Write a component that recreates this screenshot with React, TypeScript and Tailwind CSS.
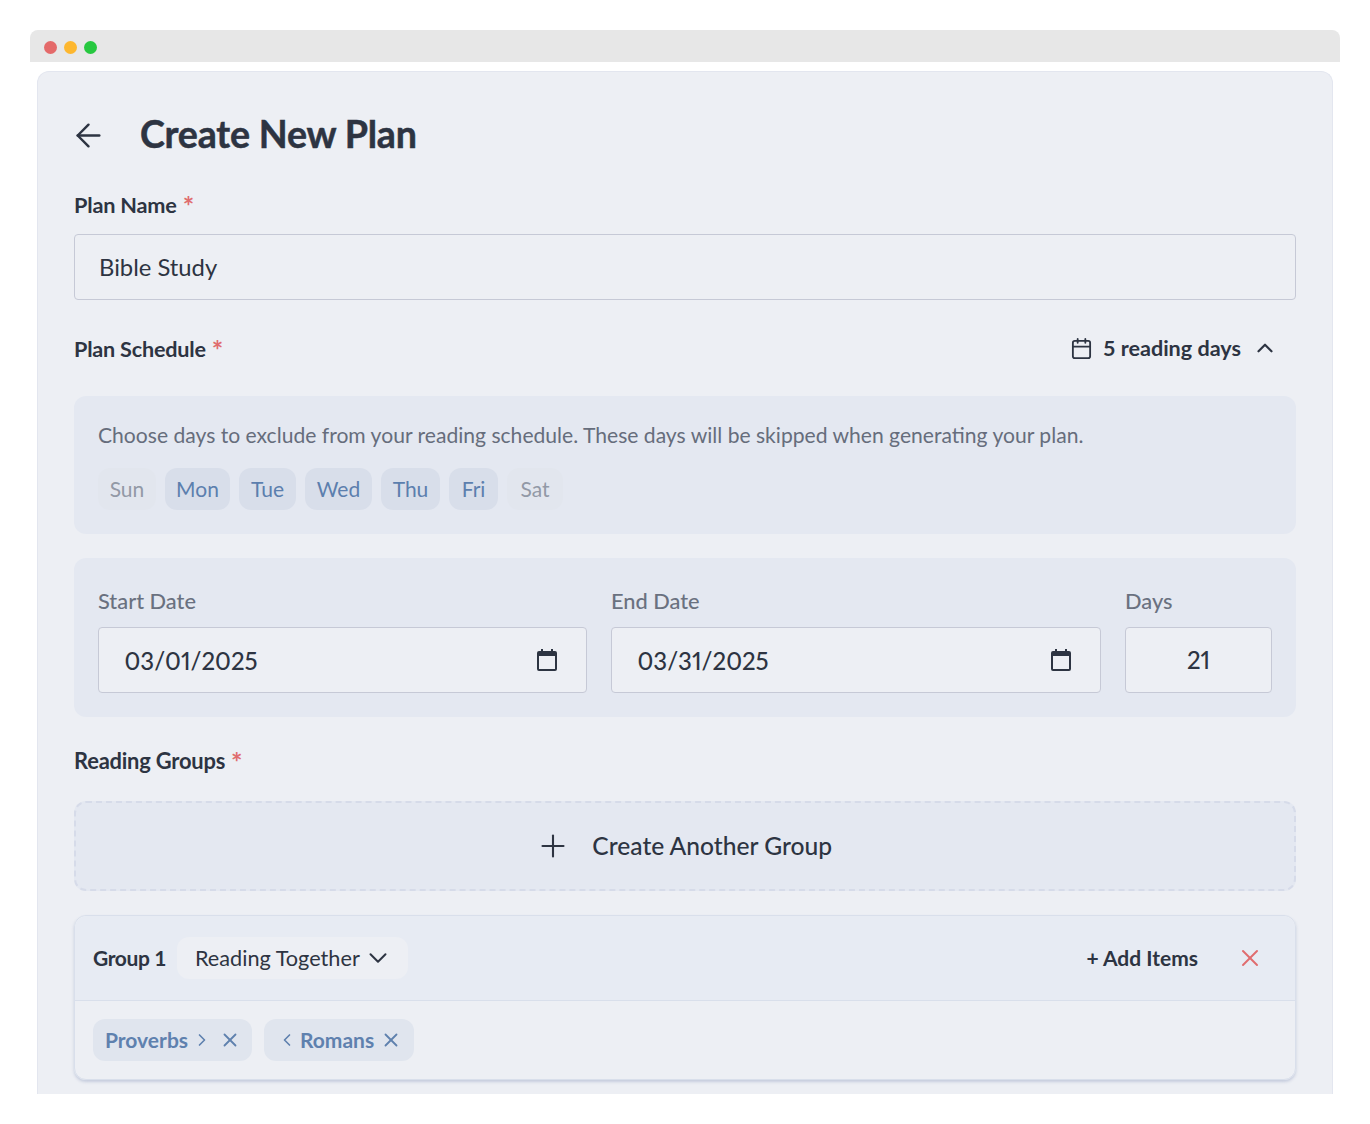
import { ArrowLeft, Calendar, ChevronDown, ChevronLeft, ChevronRight, ChevronUp, Plus, X } from "lucide-react";

const days = [
    { name: "Sun", on: false, width: "w-[58px]" },
    { name: "Mon", on: true, width: "w-[65px]" },
    { name: "Tue", on: true, width: "w-[57px]" },
    { name: "Wed", on: true, width: "w-[67px]" },
    { name: "Thu", on: true, width: "w-[59px]" },
    { name: "Fri", on: true, width: "w-[49px]" },
    { name: "Sat", on: false, width: "w-[56px]" },
];

function Label({ children, className = "text-[21.7px]" }: { children: string; className?: string }) {
    return (
        <div className={`flex h-6 items-start leading-[24px] font-bold tracking-[-0.2px] text-[#2d3442] ${className}`}>
            <span>{children}</span>
            <span className="mt-[1px] ml-[6px] text-[27px] leading-[24px] font-bold text-[#e06c6e]">*</span>
        </div>
    );
}

function DateIcon() {
    return (
        <svg width="20" height="22" viewBox="0 0 20 22" fill="none" className="text-[#2d3442]">
            <path d="M5 0v3M15 0v3" stroke="currentColor" strokeWidth="2" />
            <rect x="1" y="3" width="18" height="18" rx="1" stroke="currentColor" strokeWidth="2" />
            <rect x="1" y="3" width="18" height="4" fill="currentColor" />
        </svg>
    );
}

function DateField({ label, value, className }: { label: string; value: string; className: string }) {
    return (
        <div className={className}>
            <div className="mb-[14px] h-[24px] text-[21.8px] leading-[24px] font-medium text-[#6a7180]">{label}</div>
            <div className="flex h-[66px] items-center justify-between rounded-[4px] border border-[#c6c9d6] bg-[#edeff4] pr-[29px] pl-[25.5px] text-[24px] font-medium text-[#2d3442] proportional-nums">
                <span className="pt-[1px]">{value}</span>
                <DateIcon />
            </div>
        </div>
    );
}

export default function App() {
    return (
        <div className="h-[1124px] overflow-hidden bg-white px-[30px] pt-[30px] font-['Lato','Liberation_Sans',sans-serif]">
            <div className="flex h-8 items-center gap-[7px] rounded-t-lg bg-[#e7e7e7] pt-[2px] pl-[14px]">
                <span className="h-[13px] w-[13px] rounded-full bg-[#e46a6a]" />
                <span className="h-[13px] w-[13px] rounded-full bg-[#fdb72f]" />
                <span className="h-[13px] w-[13px] rounded-full bg-[#27c840]" />
            </div>
            <div className="mx-[7px] mt-[9px] h-[1023px] overflow-hidden rounded-t-xl border-x border-t border-[#e3e6ef] bg-[#edeff4] px-[36px]">
                <div className="flex h-[121px] items-center pt-[3px]">
                    <ArrowLeft size={37} strokeWidth={1.6} className="mt-[2px] ml-[-4.5px] text-[#2d3442]" />
                    <h1 className="ml-[33.5px] text-[37.6px] leading-none font-bold tracking-[-0.2px] text-[#2d3442] [-webkit-text-stroke:0.5px_#2d3442]">Create New Plan</h1>
                </div>

                <Label>Plan Name</Label>
                <input
                    readOnly
                    value="Bible Study"
                    className="mt-[17px] block h-[66px] w-full rounded-[4px] border border-[#c6c9d6] bg-[#edeff4] px-6 text-[23.8px] text-[#2d3442] outline-none"
                />

                <div className="mt-[37px] flex h-6 items-center justify-between pr-[18px]">
                    <Label className="text-[21.6px]">Plan Schedule</Label>
                    <div className="flex items-center text-[21.6px] font-bold text-[#2d3442]">
                        <Calendar size={23} strokeWidth={1.9} className="mt-[-2px]" />
                        <span className="mt-[-2px] ml-[10px]">5 reading days</span>
                        <ChevronUp size={26} strokeWidth={2} className="mt-[-3px] ml-[11px]" />
                    </div>
                </div>

                <section className="mt-[35px] h-[138px] rounded-xl bg-[#e4e8f1] px-6 pt-[25px]">
                    <p className="h-[28px] text-[21.1px] leading-[28px] text-[#666d7c]">
                        Choose days to exclude from your reading schedule. These days will be skipped when generating your plan.
                    </p>
                    <div className="mt-[19px] flex gap-[9px]">
                        {days.map((day) => (
                            <span
                                key={day.name}
                                className={
                                    day.on
                                        ? `flex h-[42px] items-center justify-center rounded-xl bg-[#d8deea] text-[21px] text-[#5c7fae] ${day.width}`
                                        : `flex h-[42px] items-center justify-center rounded-xl bg-[#e2e6ee] text-[21px] text-[#9299a6] ${day.width}`
                                }
                            >
                                {day.name}
                            </span>
                        ))}
                    </div>
                </section>

                <section className="mt-6 flex h-[159px] gap-6 rounded-xl bg-[#e4e8f1] px-6 pt-[31px]">
                    <DateField label="Start Date" value="03/01/2025" className="w-[489px] shrink-0" />
                    <DateField label="End Date" value="03/31/2025" className="flex-1" />
                    <div className="w-[147px] shrink-0">
                        <div className="mb-[14px] h-[24px] text-[21.8px] leading-[24px] font-medium text-[#6a7180]">Days</div>
                        <div className="flex h-[66px] items-center justify-center rounded-[4px] border border-[#c6c9d6] bg-[#edeff4] text-[24px] font-medium text-[#2d3442] proportional-nums">21</div>
                    </div>
                </section>

                <div className="mt-[32px]">
                    <Label className="text-[21.9px]">Reading Groups</Label>
                </div>

                <div className="mt-[28px] flex h-[90px] items-center justify-center rounded-xl border-2 border-dashed border-[#d6dbe9] bg-[#e4e8f1] pr-[3px] text-[24.6px] font-medium text-[#2d3442]">
                    <Plus size={36} strokeWidth={1.4} />
                    <span className="ml-[21.5px]">Create Another Group</span>
                </div>

                <div className="mt-6 h-[165px] rounded-xl border border-[#d9dfeb] shadow-[0_2px_3px_rgba(150,165,195,0.45)]">
                    <div className="flex h-[85px] items-center rounded-t-xl border-b border-[#d9dfeb] bg-[#e7ebf3] pr-[31px] pl-[18px]">
                        <span className="text-[21px] font-bold tracking-[-0.4px] text-[#2d3442]">Group 1</span>
                        <div className="ml-[11px] flex h-[42px] items-center rounded-xl bg-[#edeff4] pr-[15px] pl-[18px] text-[21.7px] text-[#2d3442]">
                            Reading Together
                            <ChevronDown size={30} strokeWidth={1.6} className="ml-[3px]" />
                        </div>
                        <span className="ml-auto text-[21px] font-bold text-[#2d3442]">+ Add Items</span>
                        <X size={28} strokeWidth={1.7} className="ml-[38px] text-[#e06c6e]" />
                    </div>
                    <div className="flex gap-3 px-[18px] pt-[18px]">
                        <span className="flex h-[42px] w-[159px] items-center rounded-xl bg-[#e0e5ee] pl-3 text-[21px] font-bold text-[#5f81ae]">
                            Proverbs
                            <ChevronRight size={20} strokeWidth={2} className="ml-[4px]" />
                            <X size={22} strokeWidth={2} className="ml-[6.5px]" />
                        </span>
                        <span className="flex h-[42px] w-[150px] items-center rounded-xl bg-[#e0e5ee] pl-[12.5px] text-[21px] font-bold text-[#5f81ae]">
                            <ChevronLeft size={20} strokeWidth={2} className="mr-[3.5px]" />
                            Romans
                            <X size={22} strokeWidth={2} className="ml-[5.5px]" />
                        </span>
                    </div>
                </div>
            </div>
        </div>
    );
}
